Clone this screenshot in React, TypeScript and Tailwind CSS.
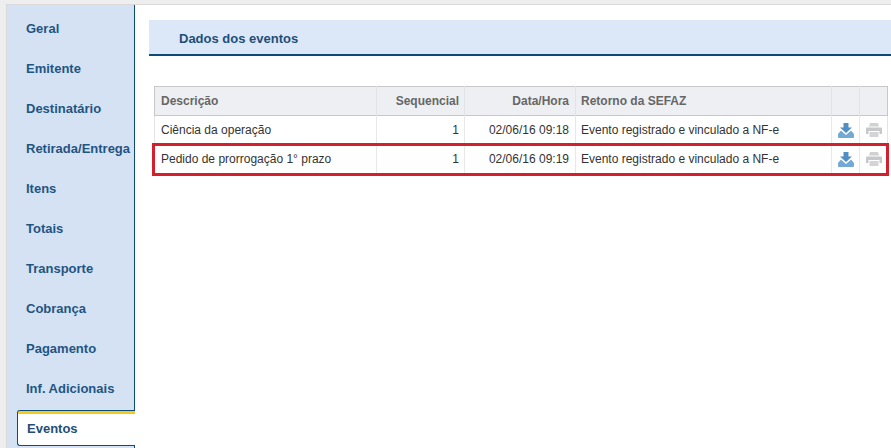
const menu = ['Geral', 'Emitente', 'Destinatário', 'Retirada/Entrega', 'Itens', 'Totais', 'Transporte', 'Cobrança', 'Pagamento', 'Inf. Adicionais'];

const rows = [
    { desc: 'Ciência da operação', seq: '1', date: '02/06/16 09:18', ret: 'Evento registrado e vinculado a NF-e' },
    { desc: 'Pedido de prorrogação 1° prazo', seq: '1', date: '02/06/16 09:19', ret: 'Evento registrado e vinculado a NF-e', marked: true },
];

function DownloadIcon() {
    return (
        <svg width="16" height="15" viewBox="0 0 16 15" className="block">
            <path d="M5.500 0h5v4.500H14L8 10 2 4.500h3.500z" fill="#4f8fc4" />
            <path d="M2.500 8L0 11v3a1 1 0 0 0 1 1h14a1 1 0 0 0 1-1v-3l-2.500-3h-1L8 12 3.500 8z" fill="#74a9d6" />
        </svg>
    );
}

function PrintIcon() {
    return (
        <svg width="16" height="14" viewBox="0 0 16 14" className="block">
            <path d="M4 0h8l1 3.500H3z" fill="#cfd1d2" />
            <path d="M1 4.500h14a1 1 0 0 1 1 1V11h-2.500V8h-11v3H0V5.500a1 1 0 0 1 1-1z" fill="#c6c8c9" />
            <path d="M3.500 9h9v5h-9z" fill="#d2d4d5" />
        </svg>
    );
}

export default function App() {
    return (
        <div className="w-[891px] h-[448px] overflow-hidden bg-[#eeeeee] pl-[6px] pt-[4px] font-['Liberation_Sans',Arial,sans-serif] text-[13px]">
            <div className="flex h-[444px] bg-white border-l border-t border-[#d9d9d9]">
                {/* Menu lateral */}
                <div className="w-[128px] shrink-0 bg-[#d5e2f4] border-r border-[#0f4c75] pt-[4px] pl-[10px]">
                    {menu.map((item) => (
                        <div key={item} className="h-10 flex items-center pl-[9px] text-[13px] font-bold text-[#1f5582] whitespace-nowrap">
                            {item}
                        </div>
                    ))}
                    <div className="mt-[1px] h-[36px] w-[118px] bg-white border-l border-t border-b border-[#0f4c75] rounded-l-[3px] overflow-hidden">
                        <div className="h-full flex items-center pl-[9px] pb-[1px] border-t-[3px] border-[#f2cb1d] text-[13px] font-bold text-[#1f4e79]">
                            Eventos
                        </div>
                    </div>
                </div>

                {/* Conteudo */}
                <div className="flex-1 min-w-0 pt-[15px] pl-[14px]">
                    <div className="h-[36px] bg-[#dce8f8] border-b-2 border-[#0f4c75] pl-[30px] pt-[3px] flex items-center text-[13px] font-bold text-[#1f4e79]">
                        Dados dos eventos
                    </div>

                    <div className="mt-[30px] ml-[5px] mr-[4px] relative">
                        <table className="w-[733px] table-fixed border-collapse text-[12px] text-[#333333]">
                            <colgroup>
                                <col className="w-[222px]" />
                                <col className="w-[88px]" />
                                <col className="w-[111px]" />
                                <col className="w-[256px]" />
                                <col className="w-[28px]" />
                                <col className="w-[28px]" />
                            </colgroup>
                            <thead>
                                <tr className="h-[29px] bg-[#eeeff2] text-[#666666] font-bold border border-[#c8c8c8]">
                                    <th className="pl-[6px] text-left border-r border-[#e2e3e6]">Descrição</th>
                                    <th className="pr-[5px] text-right border-r border-[#e2e3e6]">Sequencial</th>
                                    <th className="pr-[6px] text-right border-r border-[#e2e3e6]">Data/Hora</th>
                                    <th className="pl-[5px] text-left border-r border-[#e2e3e6]">Retorno da SEFAZ</th>
                                    <th className="border-r border-[#e2e3e6]" />
                                    <th />
                                </tr>
                            </thead>
                            <tbody>
                                {rows.map((row) => (
                                    <tr key={row.desc} className="h-[29px] border border-[#e4e4e4]">
                                        <td className="pl-[6px] border-r border-[#e8e8e8]">{row.desc}</td>
                                        <td className="pr-[5px] text-right border-r border-[#e8e8e8]">{row.seq}</td>
                                        <td className="pr-[6px] text-right border-r border-[#e8e8e8]">{row.date}</td>
                                        <td className="pl-[5px] border-r border-[#e8e8e8]">{row.ret}</td>
                                        <td className="border-r border-[#e8e8e8]">
                                            <div className="flex justify-center"><DownloadIcon /></div>
                                        </td>
                                        <td>
                                            <div className="flex justify-center"><PrintIcon /></div>
                                        </td>
                                    </tr>
                                ))}
                            </tbody>
                        </table>
                        {/* marcacao vermelha sobre a segunda linha */}
                        <div className="absolute left-[-2px] top-[57px] w-[737px] h-[33px] border-[3px] border-[#d3202c] pointer-events-none" />
                    </div>
                </div>
            </div>
        </div>
    );
}
